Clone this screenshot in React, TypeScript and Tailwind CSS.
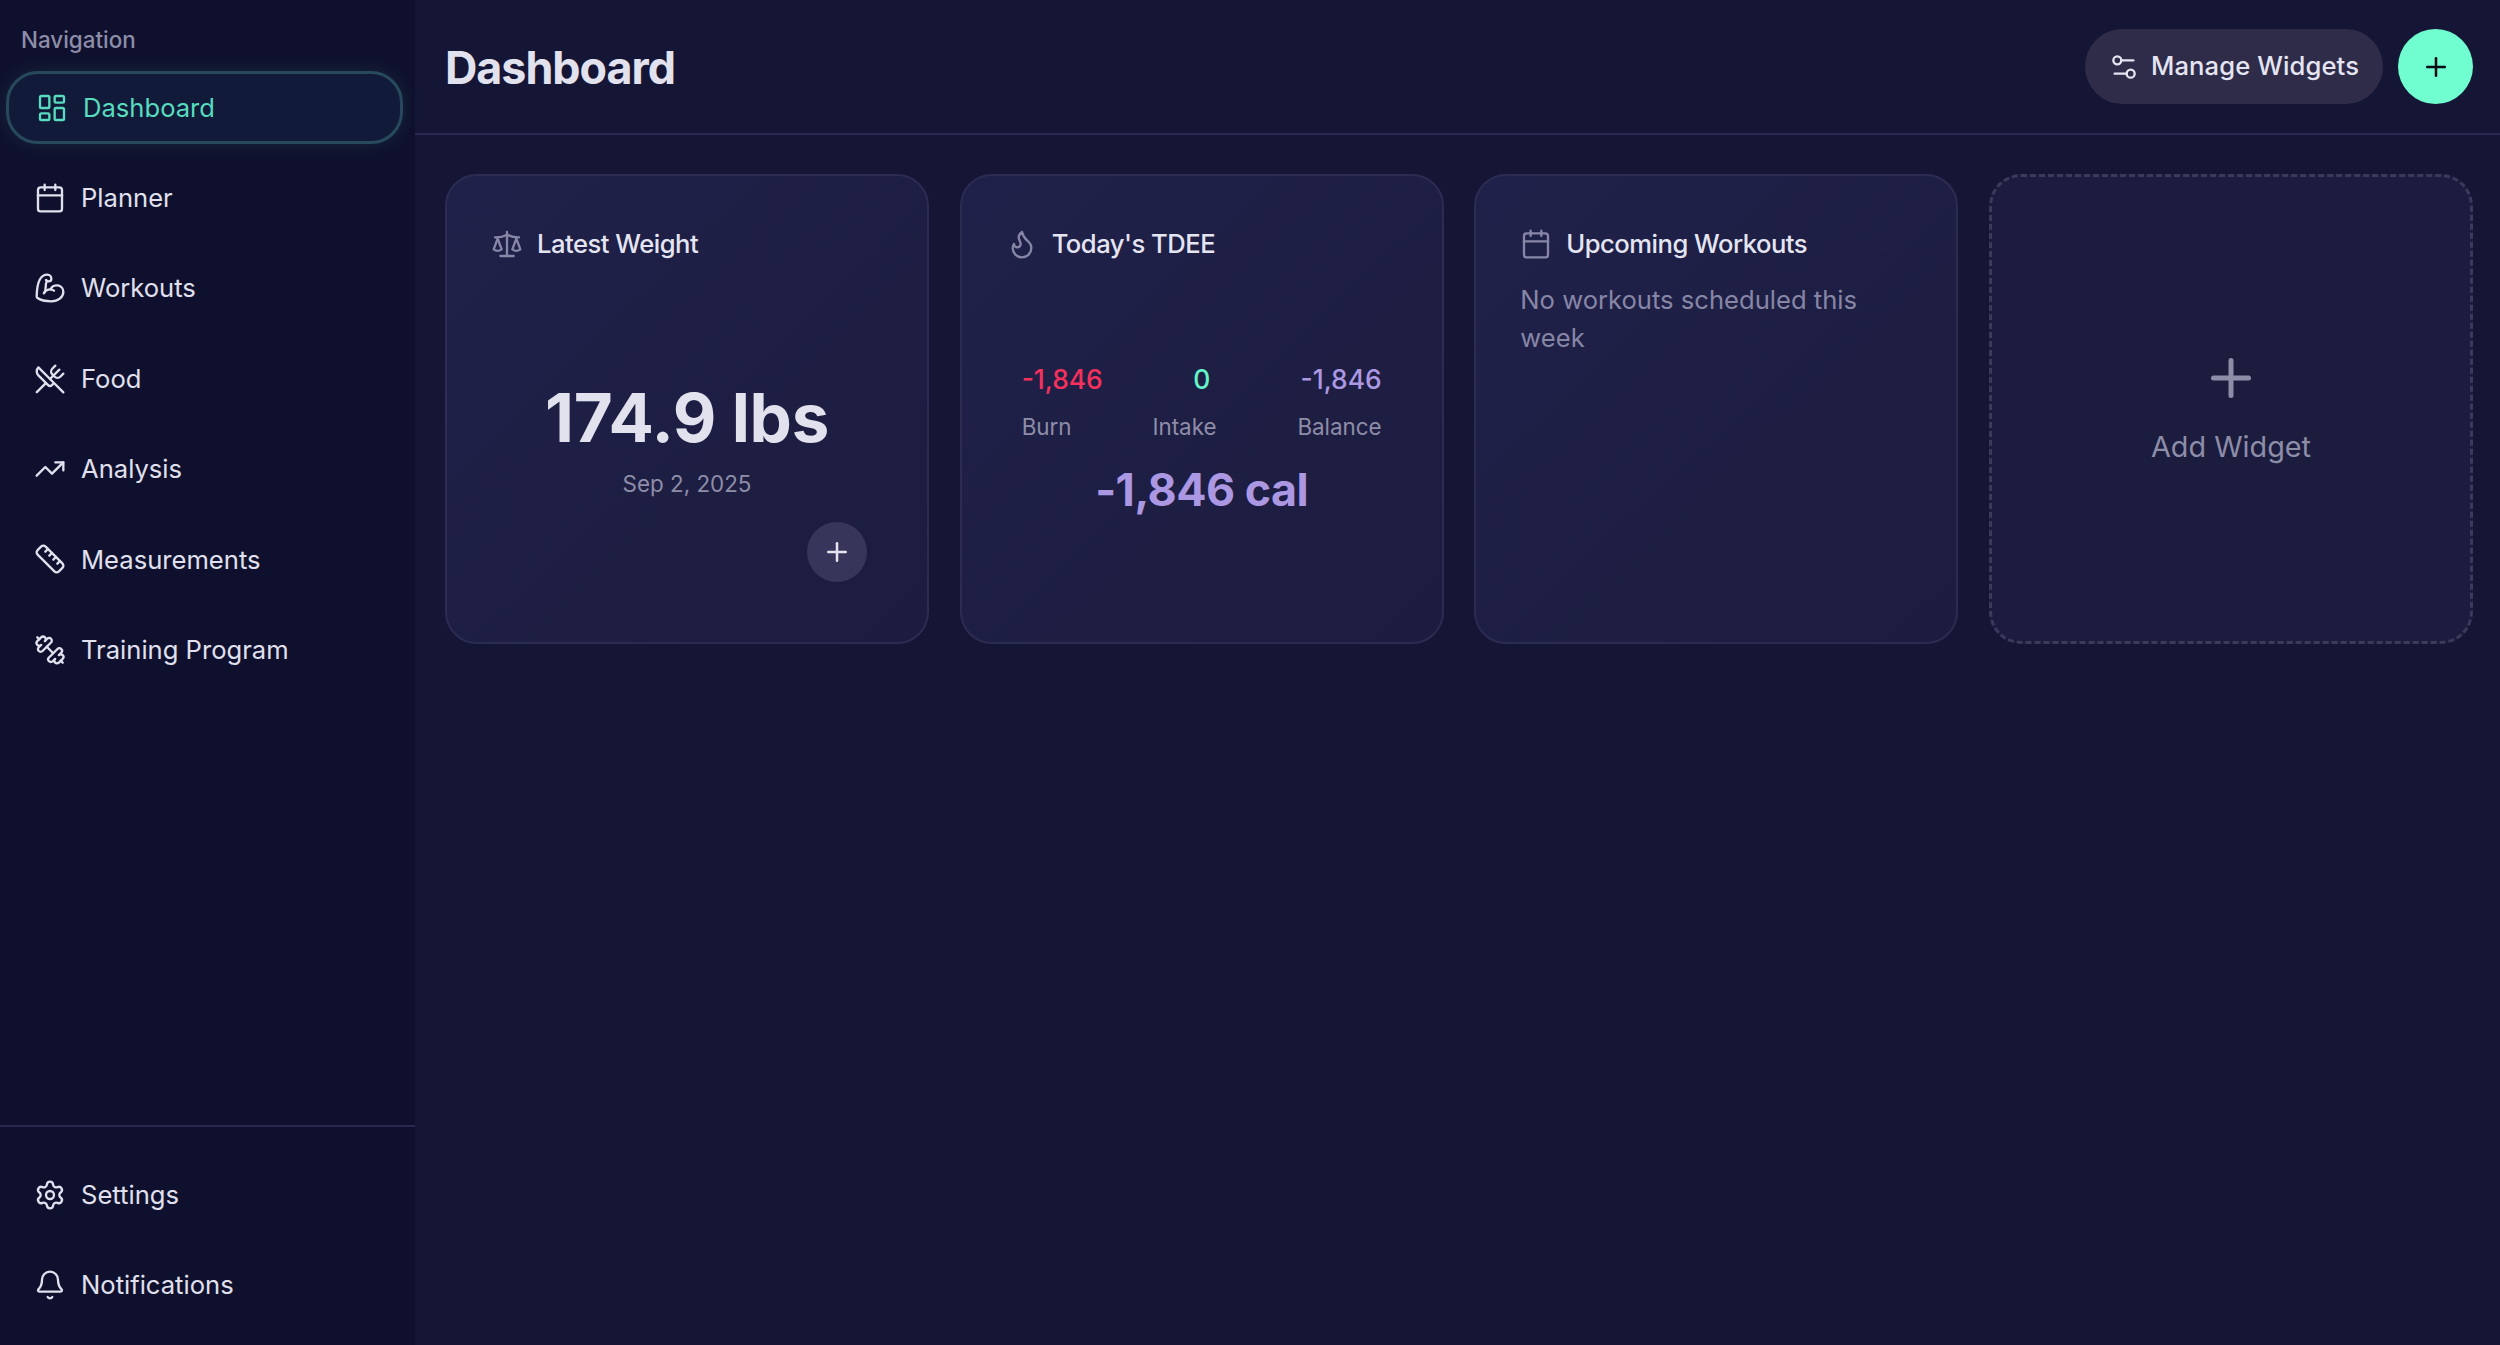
import React from "react";
import {
  LayoutDashboard, Calendar, BicepsFlexed, UtensilsCrossed, TrendingUp, Ruler, Dumbbell,
  Settings, Bell, Scale, Flame, Plus, Settings2,
} from "lucide-react";

type IconT = React.ComponentType<{ className?: string; size?: number; strokeWidth?: number }>;

function NavRow({ icon: Icon, label, active, flip }: { icon: IconT; label: string; active?: boolean; flip?: boolean }) {
  return (
    <div
      className={
        active
          ? "flex h-[73px] w-[397px] translate-x-[2px] items-center gap-[15px] rounded-[32px] border-[3px] border-[#27495c] bg-[#121a3a] pl-[27px] text-[#58dcbe] shadow-[0_0_20px_rgba(100,244,200,0.1)]"
          : "flex h-[73px] w-[397px] items-center gap-[15px] rounded-[32px] border-[3px] border-transparent pl-[27px] text-[#e0e0ee]"
      }
    >
      <Icon size={32} strokeWidth={1.75} className={flip ? "shrink-0 -scale-x-100" : "shrink-0"} />
      <span className="text-[25.6px] leading-none">{label}</span>
    </div>
  );
}

function Card({ children }: { children: React.ReactNode }) {
  return (
    <div className="relative h-[470px] rounded-[32px] border-2 border-[#2c2b52] bg-gradient-to-br from-[#20214a] to-[#1c1c3e] px-[44px] pt-[51px]">
      {children}
    </div>
  );
}

function CardTitle({ icon: Icon, title }: { icon: IconT; title: string }) {
  return (
    <div className="flex h-[34px] items-center gap-[14px]">
      <Icon size={32} strokeWidth={1.75} className="shrink-0 text-[#8786a6]" />
      <span className="text-[25.6px] font-medium leading-none tracking-[-0.5px] text-[#e5e5f2]">{title}</span>
    </div>
  );
}

export default function App() {
  return (
    <div className="flex h-[1345px] w-[2500px] overflow-hidden bg-[#151636] font-['Inter',sans-serif]">
      <aside className="flex w-[415px] shrink-0 flex-col bg-[#0f102d]">
        <div className="flex-1 pl-[4px]">
          <div className="pl-[17px] pt-[27px] text-[22.4px] font-medium leading-[26px] text-[#8e8da8]">Navigation</div>
          <nav className="mt-[18px] flex flex-col gap-[17.4px]">
            <NavRow icon={LayoutDashboard} label="Dashboard" active />
            <NavRow icon={Calendar} label="Planner" />
            <NavRow icon={BicepsFlexed} label="Workouts" />
            <NavRow icon={UtensilsCrossed} label="Food" />
            <NavRow icon={TrendingUp} label="Analysis" />
            <NavRow icon={Ruler} label="Measurements" />
            <NavRow icon={Dumbbell} label="Training Program" flip />
          </nav>
        </div>
        <div className="flex flex-col gap-[17px] border-t-2 border-[#2a2850] pb-[24px] pl-[4px] pt-[31px]">
          <NavRow icon={Settings} label="Settings" />
          <NavRow icon={Bell} label="Notifications" />
        </div>
      </aside>

      <main className="min-w-0 flex-1">
        <header className="flex h-[135px] items-center justify-between border-b-2 border-[#2a2850] pl-[30px] pr-[27px]">
          <h1 className="pt-[3px] text-[44.8px] font-bold leading-none tracking-[-1px] text-[#e2e2ee]">Dashboard</h1>
          <div className="flex items-center gap-[15px]">
            <button className="flex h-[75px] w-[298px] items-center gap-[11px] rounded-full bg-[#2e2c49] pl-[23px] text-[25.6px] font-medium tracking-[0.1px] text-[#e5e5f2]">
              <Settings2 size={32} strokeWidth={1.75} />
              <span>Manage Widgets</span>
            </button>
            <button className="flex h-[75px] w-[75px] items-center justify-center rounded-full bg-[#70fdcf] text-[#0a0a14]">
              <Plus size={30} strokeWidth={2} />
            </button>
          </div>
        </header>

        <section className="grid grid-cols-4 gap-[30.67px] pl-[30px] pr-[27px] pt-[39px]">
          <Card>
            <CardTitle icon={Scale} title="Latest Weight" />
            <div className="mt-[123px] text-center text-[67.2px] font-bold leading-none tracking-[-0.3px] text-[#e2e2ee]">174.9 lbs</div>
            <div className="mt-[22px] text-center text-[22.4px] leading-none text-[#8e8da8]">Sep 2, 2025</div>
            <button className="absolute bottom-[60px] right-[60px] flex h-[60px] w-[60px] items-center justify-center rounded-full bg-[#37365a] text-[#e5e5f2]">
              <Plus size={30} strokeWidth={2} />
            </button>
          </Card>

          <Card>
            <CardTitle icon={Flame} title="Today's TDEE" />
            <div className="mx-[16px] mt-[105px] flex justify-between text-[26.4px] font-medium leading-none">
              <span className="text-[#f5305c]">-1,846</span>
              <span className="text-[#64f4c8]">0</span>
              <span className="text-[#ac97e2]">-1,846</span>
            </div>
            <div className="mx-[16px] mt-[24px] flex justify-between text-[22.4px] leading-none text-[#8e8da8]">
              <span>Burn</span>
              <span>Intake</span>
              <span>Balance</span>
            </div>
            <div className="mt-[29px] text-center text-[44.8px] font-bold leading-none tracking-[-0.5px] text-[#ac97e2]">-1,846 cal</div>
          </Card>

          <Card>
            <CardTitle icon={Calendar} title="Upcoming Workouts" />
            <p className="mt-[20px] w-[380px] text-[25.6px] leading-[38px] text-[#8786a6]">No workouts scheduled this week</p>
          </Card>

          <div className="flex h-[470px] flex-col items-center rounded-[32px] border-[3px] border-dashed border-[#3a3a5c] bg-[#1b1c3e] pt-[171px] text-[#8e8da8]">
            <Plus size={60} strokeWidth={2} />
            <span className="mt-[25px] text-[28.8px] leading-none">Add Widget</span>
          </div>
        </section>
      </main>
    </div>
  );
}
